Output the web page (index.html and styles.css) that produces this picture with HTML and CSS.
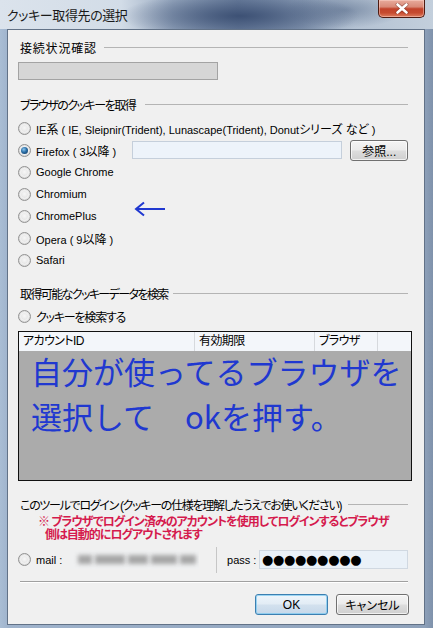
FILE: index.html
```html
<!DOCTYPE html>
<html lang="ja">
<head>
<meta charset="utf-8">
<title>クッキー取得先の選択</title>
<link rel="stylesheet" href="styles.css">
</head>
<body>
<div class="window">
  <div class="titlebar">
    <span class="title">クッキー取得先の選択</span>
    <div class="close">
      <svg width="16" height="11" viewBox="0 0 16 11"><path d="M3.5 1.5 L12.5 9.5 M12.5 1.5 L3.5 9.5" stroke="#5a1a10" stroke-width="3.8" stroke-linecap="round" opacity="0.5"/><path d="M3.5 1.5 L12.5 9.5 M12.5 1.5 L3.5 9.5" stroke="#ffffff" stroke-width="2.6" stroke-linecap="round"/></svg>
    </div>
  </div>
  <div class="client">
    <div class="group-head head1"><span>接続状況確認</span><i class="rule"></i></div>
    <div class="status-bar"></div>

    <div class="group-head head2"><span>ブラウザのクッキーを取得</span><i class="rule"></i></div>
    <div class="radios">
      <div class="radio-row"><span class="radio"></span><span>IE<span class="j">系</span> ( IE, Sleipnir(Trident), Lunascape(Trident), Donut<span class="j">シリーズ など</span> )</span></div>
      <div class="radio-row"><span class="radio checked"></span><span class="ff-label">Firefox ( 3<span class="j">以降</span> )</span><span class="field ff-field"></span><span class="btn browse">参照...</span></div>
      <div class="radio-row"><span class="radio"></span><span>Google Chrome</span></div>
      <div class="radio-row"><span class="radio"></span><span>Chromium</span></div>
      <div class="radio-row"><span class="radio"></span><span>ChromePlus</span></div>
      <div class="radio-row"><span class="radio"></span><span>Opera ( 9<span class="j">以降</span> )</span></div>
      <div class="radio-row"><span class="radio"></span><span>Safari</span></div>
    </div>

    <div class="group-head head3"><span>取得可能なクッキーデータを検索</span><i class="rule"></i></div>
    <div class="radio-row search-row"><span class="radio"></span><span class="j kana">クッキーを検索する</span></div>

    <div class="table">
      <div class="thead">
        <span>アカウントID</span>
        <span>有効期限</span>
        <span>ブラウザ</span>
        <span class="last"></span>
      </div>
      <div class="tbody">
        <div class="big">自分が使ってるブラウザを</div>
        <div class="big">選択して　okを押す。</div>
      </div>
    </div>

    <div class="group-head head4"><span>このツールでログイン (クッキーの仕様を理解したうえでお使いください)</span><i class="rule"></i></div>
    <div class="warning">
      <div class="w1">※ ブラウザでログイン済みのアカウントを使用してログインするとブラウザ</div>
      <div class="w2">側は自動的にログアウトされます</div>
    </div>

    <div class="mail-row">
      <span class="radio"></span>
      <span class="mail-label">mail :</span>
      <span class="blurred"><i class="b1"></i><i class="b2"></i><i class="b3"></i><i class="b4"></i><i class="b5"></i></span>
      <span class="vsep"></span>
      <span class="pass-label">pass :</span>
      <span class="field pass-field">●●●●●●●●●</span>
    </div>

    <div class="separator"></div>

    <div class="buttons">
      <span class="btn default">OK</span>
      <span class="btn">キャンセル</span>
    </div>

    <svg class="arrow" width="32" height="18" viewBox="0 0 32 18"><path d="M2 9 H31 M10 2.5 L2 9 L10 15.5" fill="none" stroke="#2038d0" stroke-width="2"/></svg>
  </div>
</div>
</body>
</html>
```

FILE: styles.css
```css
* { box-sizing: border-box; }
html, body { margin: 0; padding: 0; }
body {
  width: 433px;
  height: 628px;
  overflow: hidden;
  font-family: "Liberation Sans", "Noto Sans CJK JP", sans-serif;
  font-size: 12px;
  color: #000;
  font-feature-settings: "palt";
}
.window {
  width: 433px;
  height: 628px;
  display: flex;
  flex-direction: column;
  padding: 0 8px 3px 7px;
  background: linear-gradient(to right, #a9bdd4 0, #9fb3cc 2%, #8ea1ba 98%, #7f92ab 100%);
}
.titlebar {
  height: 29px;
  flex: none;
  margin: 0 -8px 0 -7px;
  padding-left: 7px;
  display: flex;
  justify-content: space-between;
  align-items: flex-start;
  background:
    radial-gradient(ellipse 120px 24px at 240px 16px, rgba(58,78,114,0.95), rgba(58,78,114,0) 100%),
    radial-gradient(ellipse 60px 18px at 345px 10px, rgba(90,110,140,0.6), rgba(90,110,140,0) 100%),
    linear-gradient(to right, #dbe3ec 0, #d2dce7 28%, #98a9c0 40%, #7387a5 55%, #8d9fb8 70%, #b4c2d3 82%, #c3cfdc 100%);
}
.title {
  line-height: 29px;
  padding-top: 1px;
  font-size: 13px;
  color: #1a1a1a;
  letter-spacing: -0.4px;
}
.close {
  width: 47px;
  height: 18px;
  margin-right: 8px;
  display: flex;
  align-items: center;
  justify-content: center;
  border: 1px solid #4e1b12;
  border-top: none;
  border-radius: 0 0 5px 5px;
  background: linear-gradient(to bottom, #e8ab9c 0%, #d98a78 40%, #c2432b 52%, #c64a2f 75%, #dd7d5f 100%);
  box-shadow: inset 0 0 0 1px rgba(255,220,210,0.45);
}
.client {
  flex: 1;
  position: relative;
  display: flex;
  flex-direction: column;
  padding: 9px 16px 0 12px;
  background: #f0f0f0;
  border: 1px solid #627287;
}
.group-head {
  height: 16px;
  display: flex;
  align-items: center;
  gap: 7px;
  white-space: nowrap;
}
.rule {
  flex: 1;
  height: 1px;
  background: #b4b4b4;
}
.head1 span { letter-spacing: 0.8px; }
.head2 { margin-top: 16px; gap: 10px; }
.head2 span { letter-spacing: -1.5px; }
.head3 { margin-top: 14px; gap: 5px; }
.head3 span { letter-spacing: -1.6px; }
.head4 { margin-top: 15px; }
.head4 span { letter-spacing: -1.3px; }
.status-bar {
  width: 200px;
  height: 18px;
  margin: 7px 0 0 -2px;
  background: #d6d6d6;
  border: 1px solid #a3a3a3;
}
.radios {
  margin-top: 5px;
  display: flex;
  flex-direction: column;
}
.radio-row {
  height: 22px;
  display: flex;
  align-items: center;
  white-space: nowrap;
  font-size: 11px;
}
.j { font-size: 12px; }
.kana { letter-spacing: -1.2px; }
.search-row { margin-top: 4px; }
.radio {
  width: 13px;
  height: 13px;
  flex: none;
  margin: 0 5px 0 -2px;
  border-radius: 50%;
  border: 1px solid #929292;
  background: radial-gradient(circle at 50% 45%, #f7f7f7 0, #e3e3e3 55%, #cfcfcf 100%);
  position: relative;
}
.radio::before {
  content: "";
  position: absolute;
  inset: 1px;
  border-radius: 50%;
  border: 1px solid #f4f4f4;
}
.radio.checked::after {
  content: "";
  position: absolute;
  left: 2px;
  top: 2px;
  width: 7px;
  height: 7px;
  border-radius: 50%;
  background: radial-gradient(circle at 40% 35%, #8cc6ee 0, #2a6ea6 45%, #0d2f55 100%);
}
.ff-label { width: 97px; }
.field {
  display: inline-flex;
  align-items: center;
  height: 18px;
  background: #edf3fa;
  border: 1px solid #c5cfdb;
}
.ff-field { width: 212px; }
.btn {
  display: inline-flex;
  align-items: center;
  justify-content: center;
  height: 21px;
  width: 73px;
  font-size: 12px;
  border: 1px solid #707070;
  border-radius: 3px;
  background: linear-gradient(to bottom, #f4f4f4 0, #ebebeb 48%, #dddddd 52%, #cfcfcf 100%);
  box-shadow: inset 0 0 0 1px rgba(255,255,255,0.7);
}
.browse {
  width: 58px;
  margin-left: 8px;
}
.table {
  width: 394px;
  height: 150px;
  margin: 4px 0 0 -2px;
  border: 1px solid #111;
  display: flex;
  flex-direction: column;
  background: #ababab;
}
.thead {
  height: 19px;
  flex: none;
  display: grid;
  grid-template-columns: 176px 120px 63px 1fr;
  background: #f3f6fa;
}
.thead span {
  line-height: 19px;
  padding-left: 4px;
  border-right: 1px solid #d6d9dd;
  letter-spacing: -0.6px;
}
.thead .last { border-right: none; }
.tbody {
  flex: 1;
  padding-left: 12px;
}
.big {
  font-family: "Noto Sans CJK JP", sans-serif;
  font-feature-settings: normal;
  font-size: 31px;
  line-height: 45px;
  color: #2038d0;
  white-space: nowrap;
}
.big:first-child { margin-top: -3px; }
.warning {
  margin-top: 4px;
  color: #d51a4d;
  font-weight: bold;
  line-height: 13px;
  white-space: nowrap;
  letter-spacing: -1px;
}
.w1 { padding-left: 18px; }
.w2 { padding-left: 25px; }
.mail-row {
  height: 21px;
  margin-top: 7px;
  display: flex;
  align-items: center;
  white-space: nowrap;
  font-size: 11px;
}
.mail-label { width: 34px; }
.blurred {
  width: 130px;
  height: 19px;
  position: relative;
  display: flex;
  align-items: center;
  gap: 3px;
  padding-left: 8px;
  background: #eff0f1;
  overflow: hidden;
}
.blurred i {
  display: block;
  height: 9px;
  background: #8e8e8e;
  filter: blur(2px);
  opacity: 0.75;
}
.b1 { width: 14px; }
.b2 { width: 30px; }
.b3 { width: 20px; }
.b4 { width: 26px; }
.b5 { width: 16px; }
.vsep {
  width: 1px;
  height: 26px;
  margin-left: 17px;
  background: #c6c6c6;
}
.pass-label {
  width: 32px;
  margin-left: 10px;
}
.pass-field {
  width: 150px;
  height: 19px;
  padding-left: 2px;
  font-family: "DejaVu Sans", sans-serif;
  font-size: 13px;
  letter-spacing: -0.3px;
  background: #eaf1f8;
  border-color: #d0d8e1;
}
.separator {
  height: 2px;
  margin-top: 11px;
  border-top: 1px solid #a0a0a0;
  border-bottom: 1px solid #ffffff;
}
.buttons {
  margin: 11px -1px 0 0;
  display: flex;
  justify-content: flex-end;
  gap: 8px;
}
.btn.default {
  border-color: #3c7fb1;
  background: linear-gradient(to bottom, #eef5fb 0, #e2ecf5 48%, #d3e1ee 52%, #c6d8ea 100%);
  box-shadow: inset 0 0 0 1px rgba(120,200,240,0.7);
}
.arrow {
  position: absolute;
  left: 126px;
  top: 170px;
}
```
